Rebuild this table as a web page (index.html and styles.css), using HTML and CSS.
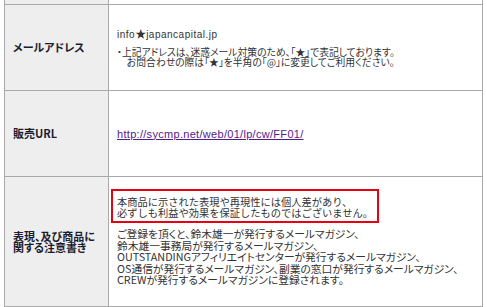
FILE: index.html
```html
<!DOCTYPE html>
<html lang="ja">
<head>
<meta charset="utf-8">
<title>特定商取引法に基づく表記</title>
<link rel="stylesheet" href="styles.css">
</head>
<body>
<div class="sheet">
  <div class="th th-cap"></div>
  <div class="td td-cap"></div>

  <div class="th">メールアドレス</div>
  <div class="td td-mail">
    <p class="addr">info<span class="star">★</span>japancapital.jp</p>
    <p class="note">・上記アドレスは、迷惑メール対策のため、「★」で表記しております。<br>　お問合わせの際は「★」を半角の「@」に変更してご利用ください。</p>
  </div>

  <div class="th">販売URL</div>
  <div class="td td-url">
    <a class="link" href="#">http://sycmp.net/web/01/lp/cw/FF01/</a>
  </div>

  <div class="th th-multi">表現、及び商品に<br>関する注意書き</div>
  <div class="td td-notice">
    <p class="alert">本商品に示された表現や再現性には個人差があり、<br>必ずしも利益や効果を保証したものではございません。</p>
    <p class="lists">ご登録を頂くと、鈴木雄一が発行するメールマガジン、<br>鈴木雄一事務局が発行するメールマガジン、<br>OUTSTANDINGアフィリエイトセンターが発行するメールマガジン、<br>OS通信が発行するメールマガジン、副業の窓口が発行するメールマガジン、<br>CREWが発行するメールマガジンに登録されます。</p>
  </div>
</div>
</body>
</html>
```

FILE: styles.css
```css
html, body {
  margin: 0;
  padding: 0;
  background: #ffffff;
}

body {
  padding-left: 4px;
  font-family: "Noto Sans CJK JP", "Noto Sans", sans-serif;
  font-feature-settings: "palt";
  color: #333333;
}

p {
  margin: 0;
}

.sheet {
  display: grid;
  grid-template-columns: 103px 373px;
  grid-template-rows: 4px 85px 85px 129px;
  gap: 1px;
  padding: 0 1px 1px 1px;
  width: 479px;
  box-sizing: border-box;
  background: #a9a9a9;
}

.th {
  background: #eeeeee;
  display: flex;
  align-items: center;
  padding-left: 8px;
  font-size: 11px;
  line-height: 11px;
  font-weight: bold;
  color: #1c1c30;
}

.td {
  background: #ffffff;
  padding-left: 8px;
  font-size: 10px;
}

.td-mail {
  padding-top: 23px;
}

.addr {
  font-family: "Liberation Sans", sans-serif;
  font-size: 10px;
  line-height: 10px;
  letter-spacing: 0.5px;
  margin-bottom: 8px;
}

.star {
  font-family: "Noto Sans CJK JP", sans-serif;
  font-size: 11px;
  letter-spacing: 0;
}

.note {
  font-size: 9.8px;
  line-height: 9.5px;
}

.td-url {
  display: flex;
  align-items: center;
}

.link {
  font-family: "Liberation Sans", sans-serif;
  font-size: 11px;
  letter-spacing: 0.3px;
  color: #551a8b;
  text-decoration: underline;
}

.td-notice {
  padding-left: 2px;
  padding-top: 12px;
}

.alert {
  width: 268px;
  box-sizing: border-box;
  border: 2px solid #e60012;
  padding: 5px 0 3px 4px;
  font-size: 10.25px;
  font-feature-settings: normal;
  line-height: 11px;
  margin-bottom: 5px;
}

.lists {
  padding-left: 6px;
  font-size: 10.75px;
  line-height: 11.5px;
}
```
